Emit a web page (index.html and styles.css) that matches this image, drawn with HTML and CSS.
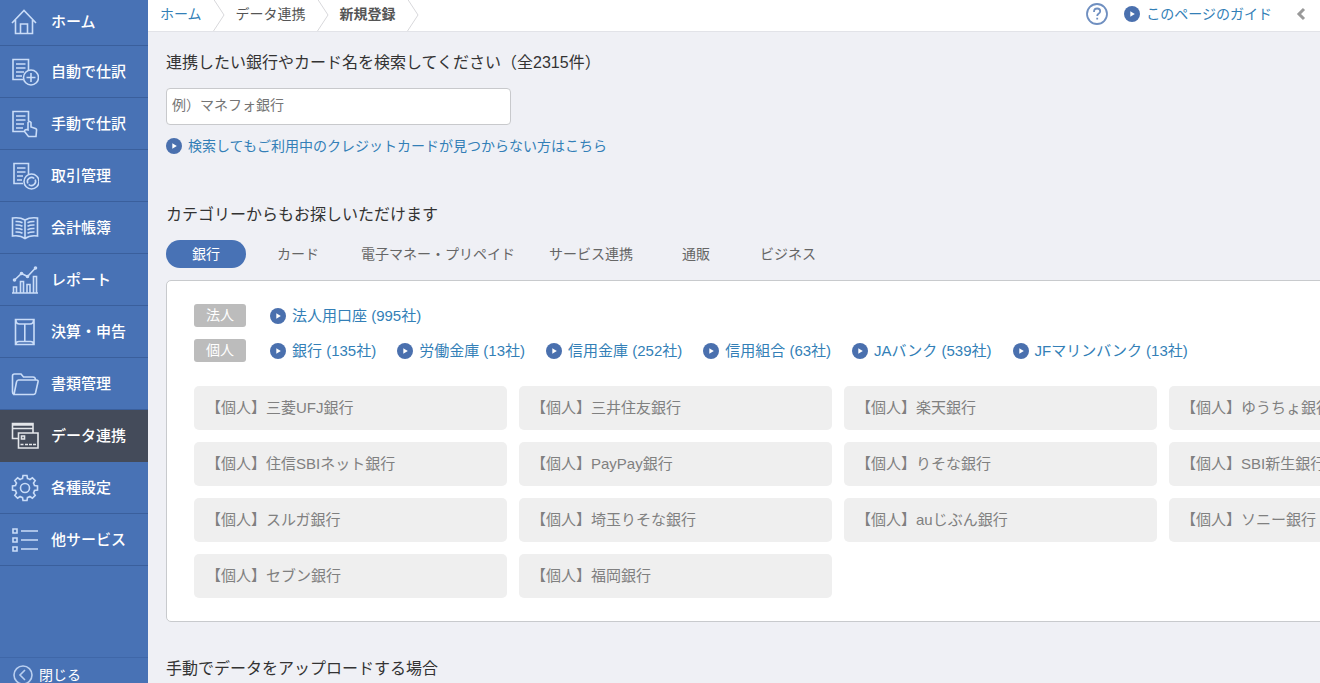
FILE: index.html
```html
<!DOCTYPE html>
<html lang="ja">
<head>
<meta charset="utf-8">
<title>新規登録</title>
<link rel="stylesheet" href="styles.css">
</head>
<body>
<svg class="defs" aria-hidden="true">
  <symbol id="arrow" viewBox="0 0 16 16"><circle cx="8" cy="8" r="8" fill="#4a70ae"/><path d="M6.300 5.300v5.400L10.800 8z" fill="#fff"/></symbol>
  <symbol id="sep" viewBox="0 0 12 31"><path d="M.5-1 11 15 .5 31" fill="none" stroke="#d8d8db"/></symbol>
</svg>
<div class="app">
  <nav class="sidebar">
    <ul class="menu">
      <li><a class="item" href="#"><svg class="icon" viewBox="0 0 28 28"><path d="M1 15 13 2.500 25 15M4.500 12v13.500h17V12M9.500 25.500V16h7v9.500"/></svg>ホーム</a></li>
      <li><a class="item" href="#"><svg class="icon" viewBox="0 0 28 28"><path d="M12 21.500H2V1.500h15.500V12M5 6h9.500M5 10h9.500M5 14h8M5 18h6M20 15v9M15.500 19.500h9"/><circle cx="20" cy="19.500" r="7.500"/></svg>自動で仕訳</a></li>
      <li><a class="item" href="#"><svg class="icon" viewBox="0 0 28 28"><path d="M13 21.500H2V1.500h15.500V11M5 6h9.500M5 10h9.500M5 14h8M5 18h7M17 20v-7.500q1.500-2 3 0V17l4.500 1.500q1.500.5 1 2.500L25 26.500h-7.500l-4-5q0-2 2-2z"/></svg>手動で仕訳</a></li>
      <li><a class="item" href="#"><svg class="icon" viewBox="0 0 28 28"><path d="M12 21.500H3V1.500h14.500V12M6 6h8.500M6 10h8.500M6 14h6M6 18h5"/><circle cx="20.500" cy="19.500" r="7.500"/><path d="M16.800 21.500a4.200 4.200 0 0 1 6.500-5M24.200 17.500a4.200 4.200 0 0 1-6.500 5"/></svg>取引管理</a></li>
      <li><a class="item" href="#"><svg class="icon" viewBox="0 0 28 28"><path d="M14 6Q9 3 1.500 4v18q8-1 12.500 2.500Q18.500 21 26.500 22V4Q19 3 14 6v18M4.500 7.500q4-.3 7 1.200M4.500 11q4-.3 7 1.200M4.500 14.500q4-.3 7 1.200M4.500 18q4-.3 7 1.200M23.500 7.500q-4-.3-7 1.200M23.500 11q-4-.3-7 1.200M23.500 14.500q-4-.3-7 1.200M23.500 18q-4-.3-7 1.200"/></svg>会計帳簿</a></li>
      <li><a class="item" href="#"><svg class="icon" viewBox="0 0 28 28"><path d="M1 27h26M2.500 27v-6h3v6M9.500 27V15.500h3V27M16 27v-8.500h3V27M22.500 27V10.500h3V27M3.500 14l7-6.500 6 3L24.500 2"/><path class="solid" d="M2.500 14a1 1 0 1 0 2 0 1 1 0 1 0-2 0M9.500 7.500a1 1 0 1 0 2 0 1 1 0 1 0-2 0M15.500 10.500a1 1 0 1 0 2 0 1 1 0 1 0-2 0M23.500 2a1 1 0 1 0 2 0 1 1 0 1 0-2 0"/></svg>レポート</a></li>
      <li><a class="item" href="#"><svg class="icon" viewBox="0 0 28 28"><path d="M4.500 1.500h18.500v25H4.500zM5 2q0 4 3.500 4H19q3.500 0 3.500-4M5 26q0-2.500 3-2.500h11.500q3 0 3 2.500M13.800 6v17.500"/></svg>決算・申告</a></li>
      <li><a class="item" href="#"><svg class="icon" viewBox="0 0 28 28"><path d="M3 24.500Q1.500 24 1.500 22V6q0-2 2-2H10l2.500 3H22q2.500 0 2.500 3M3 24.500h19.500q1.500 0 2-1.500L27 12q.5-2-1.500-2H7.500Q6 10 5.500 12z"/></svg>書類管理</a></li>
      <li><a class="item active" href="#" aria-current="page"><svg class="icon" viewBox="0 0 28 28"><path d="M7 16.500H1.500V1.500H22V11M1.500 3h20.500M1.500 6.500h20.500M7.500 11h19.500v15H7.500zM10.500 14h3v3h-3zM9.500 22.500h3M14 22.500h3M18 22.500h3M22 22.500h3"/></svg>データ連携</a></li>
      <li><a class="item" href="#"><svg class="icon" viewBox="0 0 28 28"><circle cx="14" cy="14" r="4.500"/><path d="M11.500 4.500 12 1.500h4l.5 3Q17.600 4.700 18.950 5.500L21.400 3.800 24.200 6.600 22.500 9.050Q23.300 10.400 23.500 11.500L26.500 12v4l-3 .5Q23.300 17.600 22.500 18.950L24.200 21.400 21.400 24.200 18.950 22.500Q17.600 23.300 16.500 23.500L16 26.500h-4l-.5-3Q10.400 23.300 9.050 22.500L6.600 24.200 3.800 21.400 5.500 18.950Q4.700 17.600 4.500 16.500L1.500 16v-4l3-.5Q4.700 10.400 5.500 9.050L3.800 6.600 6.600 3.800 9.050 5.500Q10.400 4.700 11.500 4.500z"/></svg>各種設定</a></li>
      <li><a class="item" href="#"><svg class="icon" viewBox="0 0 28 28"><path d="M2 3h4v4H2zM2 12h4v4H2zM2 21h4v4H2zM10 5h17M10 14h17M10 23h17"/></svg>他サービス</a></li>
    </ul>
    <button class="close" type="button"><svg class="close-icon" viewBox="0 0 20 20"><circle cx="10" cy="10" r="9"/><path d="m12 5-5 5 5 5"/></svg>閉じる</button>
  </nav>
  <div class="page">
    <header class="topbar">
      <nav class="crumbs">
        <a href="#">ホーム</a><svg class="sep"><use href="#sep"/></svg>
        <span>データ連携</span><svg class="sep"><use href="#sep"/></svg>
        <strong>新規登録</strong><svg class="sep"><use href="#sep"/></svg>
      </nav>
      <div class="tools">
        <button class="plain" type="button" aria-label="ヘルプ"><svg class="help" viewBox="0 0 22 22"><circle cx="11" cy="11" r="10"/><path d="M8 9q0-3.500 3.200-3.500 3 0 3 2.700 0 1.500-1.700 2.600-1.300.9-1.300 2.200M11.200 14.800v1.700"/></svg></button>
        <a class="link guide" href="#"><svg class="dot"><use href="#arrow"/></svg>このページのガイド</a>
        <button class="plain" type="button" aria-label="開く"><svg class="chev" viewBox="0 0 10 14"><path d="M8 2 3 7l5 5"/></svg></button>
      </div>
    </header>
    <main class="content">
      <h2><label for="bank-search">連携したい銀行やカード名を検索してください（全2315件）</label></h2>
      <input class="search" id="bank-search" type="text" placeholder="例）マネフォ銀行">
      <a class="link missing" href="#"><svg class="dot"><use href="#arrow"/></svg>検索してもご利用中のクレジットカードが見つからない方はこちら</a>
      <h2 class="category-title">カテゴリーからもお探しいただけます</h2>
      <div class="tabs" role="tablist">
        <button class="tab selected" type="button" role="tab" aria-selected="true">銀行</button>
        <button class="tab" type="button" role="tab">カード</button>
        <button class="tab" type="button" role="tab">電子マネー・プリペイド</button>
        <button class="tab" type="button" role="tab">サービス連携</button>
        <button class="tab" type="button" role="tab">通販</button>
        <button class="tab" type="button" role="tab">ビジネス</button>
      </div>
      <section class="panel">
        <div class="group"><span class="badge">法人</span>
          <div class="kinds">
            <a class="link" href="#"><svg class="dot"><use href="#arrow"/></svg>法人用口座 (995社)</a>
          </div>
        </div>
        <div class="group"><span class="badge">個人</span>
          <div class="kinds">
            <a class="link" href="#"><svg class="dot"><use href="#arrow"/></svg>銀行 (135社)</a>
            <a class="link" href="#"><svg class="dot"><use href="#arrow"/></svg>労働金庫 (13社)</a>
            <a class="link" href="#"><svg class="dot"><use href="#arrow"/></svg>信用金庫 (252社)</a>
            <a class="link" href="#"><svg class="dot"><use href="#arrow"/></svg>信用組合 (63社)</a>
            <a class="link" href="#"><svg class="dot"><use href="#arrow"/></svg>JAバンク (539社)</a>
            <a class="link" href="#"><svg class="dot"><use href="#arrow"/></svg>JFマリンバンク (13社)</a>
          </div>
        </div>
        <div class="banks">
          <a class="bank" href="#">【個人】三菱UFJ銀行</a>
          <a class="bank" href="#">【個人】三井住友銀行</a>
          <a class="bank" href="#">【個人】楽天銀行</a>
          <a class="bank" href="#">【個人】ゆうちょ銀行</a>
          <a class="bank" href="#">【個人】住信SBIネット銀行</a>
          <a class="bank" href="#">【個人】PayPay銀行</a>
          <a class="bank" href="#">【個人】りそな銀行</a>
          <a class="bank" href="#">【個人】SBI新生銀行</a>
          <a class="bank" href="#">【個人】スルガ銀行</a>
          <a class="bank" href="#">【個人】埼玉りそな銀行</a>
          <a class="bank" href="#">【個人】auじぶん銀行</a>
          <a class="bank" href="#">【個人】ソニー銀行</a>
          <a class="bank" href="#">【個人】セブン銀行</a>
          <a class="bank" href="#">【個人】福岡銀行</a>
        </div>
      </section>
      <h2>手動でデータをアップロードする場合</h2>
    </main>
  </div>
</div>
</body>
</html>
```

FILE: styles.css
```css
* { box-sizing: border-box; }

body {
  margin: 0;
  background: #eff0f5;
  color: #333;
  font: 14px/20px "Liberation Sans", "Noto Sans CJK JP", sans-serif;
}

a { color: inherit; text-decoration: none; }

button { font: inherit; cursor: pointer; }

.defs { position: absolute; width: 0; height: 0; }

.app {
  display: flex;
  height: 100vh;
  overflow: hidden;
  white-space: nowrap;
}

/* Side menu */
.sidebar {
  display: flex;
  flex-direction: column;
  flex: none;
  width: 148px;
  height: calc(100vh + 10px);
  background: #4872b5;
  color: #fff;
}

.menu { margin: 0; padding: 0; list-style: none; }

.item {
  display: flex;
  align-items: center;
  gap: 12px;
  height: 52px;
  padding-left: 11px;
  border-bottom: 1px solid #3a5f9c;
  font-size: 15px;
  font-weight: 500;
}

.menu li:first-child .item { height: 46px; padding-bottom: 2px; }

.item.active { background: #444b5a; border-color: #444b5a; }

.icon {
  width: 28px;
  height: 28px;
  fill: none;
  stroke: #c9dcf8;
  stroke-width: 1.6;
}

.icon .solid { fill: #c9dcf8; }

.active .icon { stroke: #e4e6ea; }

.close {
  display: flex;
  align-items: center;
  gap: 6px;
  height: 36px;
  margin-top: auto;
  padding: 0 0 2px 13px;
  border: 0;
  border-top: 1px solid #3f67a8;
  background: none;
  color: #fff;
}

.close-icon { width: 20px; height: 20px; fill: none; stroke: #b9cff0; stroke-width: 1.6; }

/* Top bar */
.page { flex: 1; min-width: 0; }

.topbar {
  display: flex;
  justify-content: space-between;
  height: 32px;
  border-bottom: 1px solid #e2e3e8;
  background: #fff;
}

.crumbs {
  display: flex;
  gap: 11px;
  padding-left: 12px;
  color: #555;
  line-height: 28px;
}

.crumbs a { color: #337fb7; }

.sep { width: 12px; height: 31px; }

.tools {
  display: flex;
  align-items: center;
  gap: 16px;
  padding: 0 14px 3px 0;
}

.plain { display: flex; padding: 0; border: 0; background: none; }

.help { width: 22px; height: 22px; fill: none; stroke: #6f8fc0; stroke-width: 1.8; }

.chev { width: 10px; height: 14px; fill: none; stroke: #999; stroke-width: 3; }

.guide { margin-right: 8px; }

/* Content */
.content { padding: 19px 0 0 18px; }

h2 { margin: 0; font-size: 16px; font-weight: 400; line-height: 24px; }

.search {
  display: block;
  width: 345px;
  height: 37px;
  margin: 13px 0 11px;
  padding: 0 5px 3px;
  border: 1px solid #c8c9cc;
  border-radius: 4px;
  background: #fff;
  color: #333;
  font: inherit;
}

.search::placeholder { color: #757575; }

.link {
  display: inline-flex;
  align-items: center;
  gap: 6px;
  color: #337fb7;
}

.dot { flex: none; width: 16px; height: 16px; }

.missing { display: flex; }

.category-title { margin-top: 47px; }

.tabs { display: flex; gap: 12px; margin: 13px 0 12px; }

.tab {
  min-width: 80px;
  height: 28px;
  padding: 0 11px;
  border: 0;
  border-radius: 14px;
  background: none;
  color: #666;
}

.tab.selected { background: #4872b5; color: #fff; }

.panel {
  width: max-content;
  min-width: 100%;
  margin-bottom: 35px;
  padding: 23px 27px;
  border: 1px solid #c8cacd;
  border-radius: 5px;
  background: #fff;
}

.group {
  display: flex;
  align-items: center;
  gap: 24px;
  height: 23px;
  margin-bottom: 12px;
  font-size: 15px;
}

.kinds { display: flex; gap: 21px; }

.badge {
  width: 52px;
  border-radius: 3px;
  background: #bcbcbc;
  color: #fff;
  font-size: 14px;
  line-height: 23px;
  text-align: center;
}

.banks {
  display: grid;
  grid-template-columns: repeat(4, 313px);
  gap: 12px;
  margin-top: 24px;
}

.bank {
  padding: 0 12px;
  border-radius: 5px;
  background: #efefef;
  color: #808080;
  font-size: 15px;
  line-height: 44px;
}
```
